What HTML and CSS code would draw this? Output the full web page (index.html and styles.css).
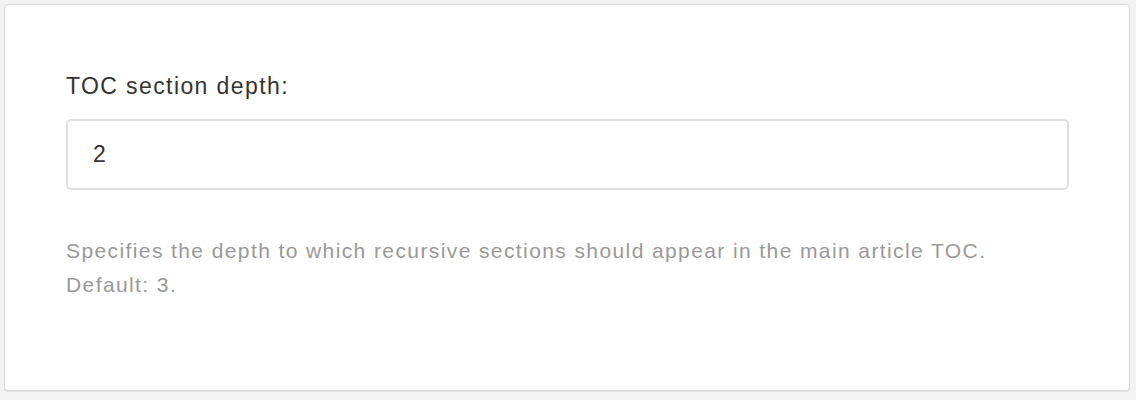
FILE: index.html
```html
<!DOCTYPE html>
<html>
<head>
<meta charset="utf-8">
<link rel="stylesheet" href="styles.css">
</head>
<body>
<div class="card">
  <label class="field-label" for="toc">TOC section depth:</label>
  <input class="field-input" id="toc" type="text" value="2">
  <p class="help">Specifies the depth to which recursive sections should appear in the main article TOC.<br>Default: 3.</p>
</div>
</body>
</html>
```
FILE: styles.css
```css
html, body {
  margin: 0;
  padding: 0;
}
body {
  background: #f3f3f3;
  padding: 4px;
  font-family: "Liberation Sans", Arial, Helvetica, sans-serif;
}
.card {
  box-sizing: border-box;
  width: 1126px;
  height: 387px;
  background: #fff;
  border: 1px solid #dadada;
  border-radius: 4px;
  box-shadow: 0 1px 1px rgba(0, 0, 0, 0.08);
  padding: 66px 60px 0 61px;
  display: flex;
  flex-direction: column;
}
.field-label {
  font-size: 23px;
  line-height: 30px;
  letter-spacing: 1.4px;
  color: #333;
}
.field-input {
  box-sizing: border-box;
  margin-top: 18px;
  width: 1003px;
  height: 71px;
  border: 2px solid #e0e0e0;
  border-radius: 5px;
  padding: 0 25px;
  font-family: "Liberation Sans", Arial, Helvetica, sans-serif;
  font-size: 23px;
  letter-spacing: 1.4px;
  color: #333;
  outline: none;
  background: #fff;
}
.help {
  margin: 44px 0 0;
  font-size: 21px;
  line-height: 34px;
  letter-spacing: 1.4px;
  color: #999;
}
```
